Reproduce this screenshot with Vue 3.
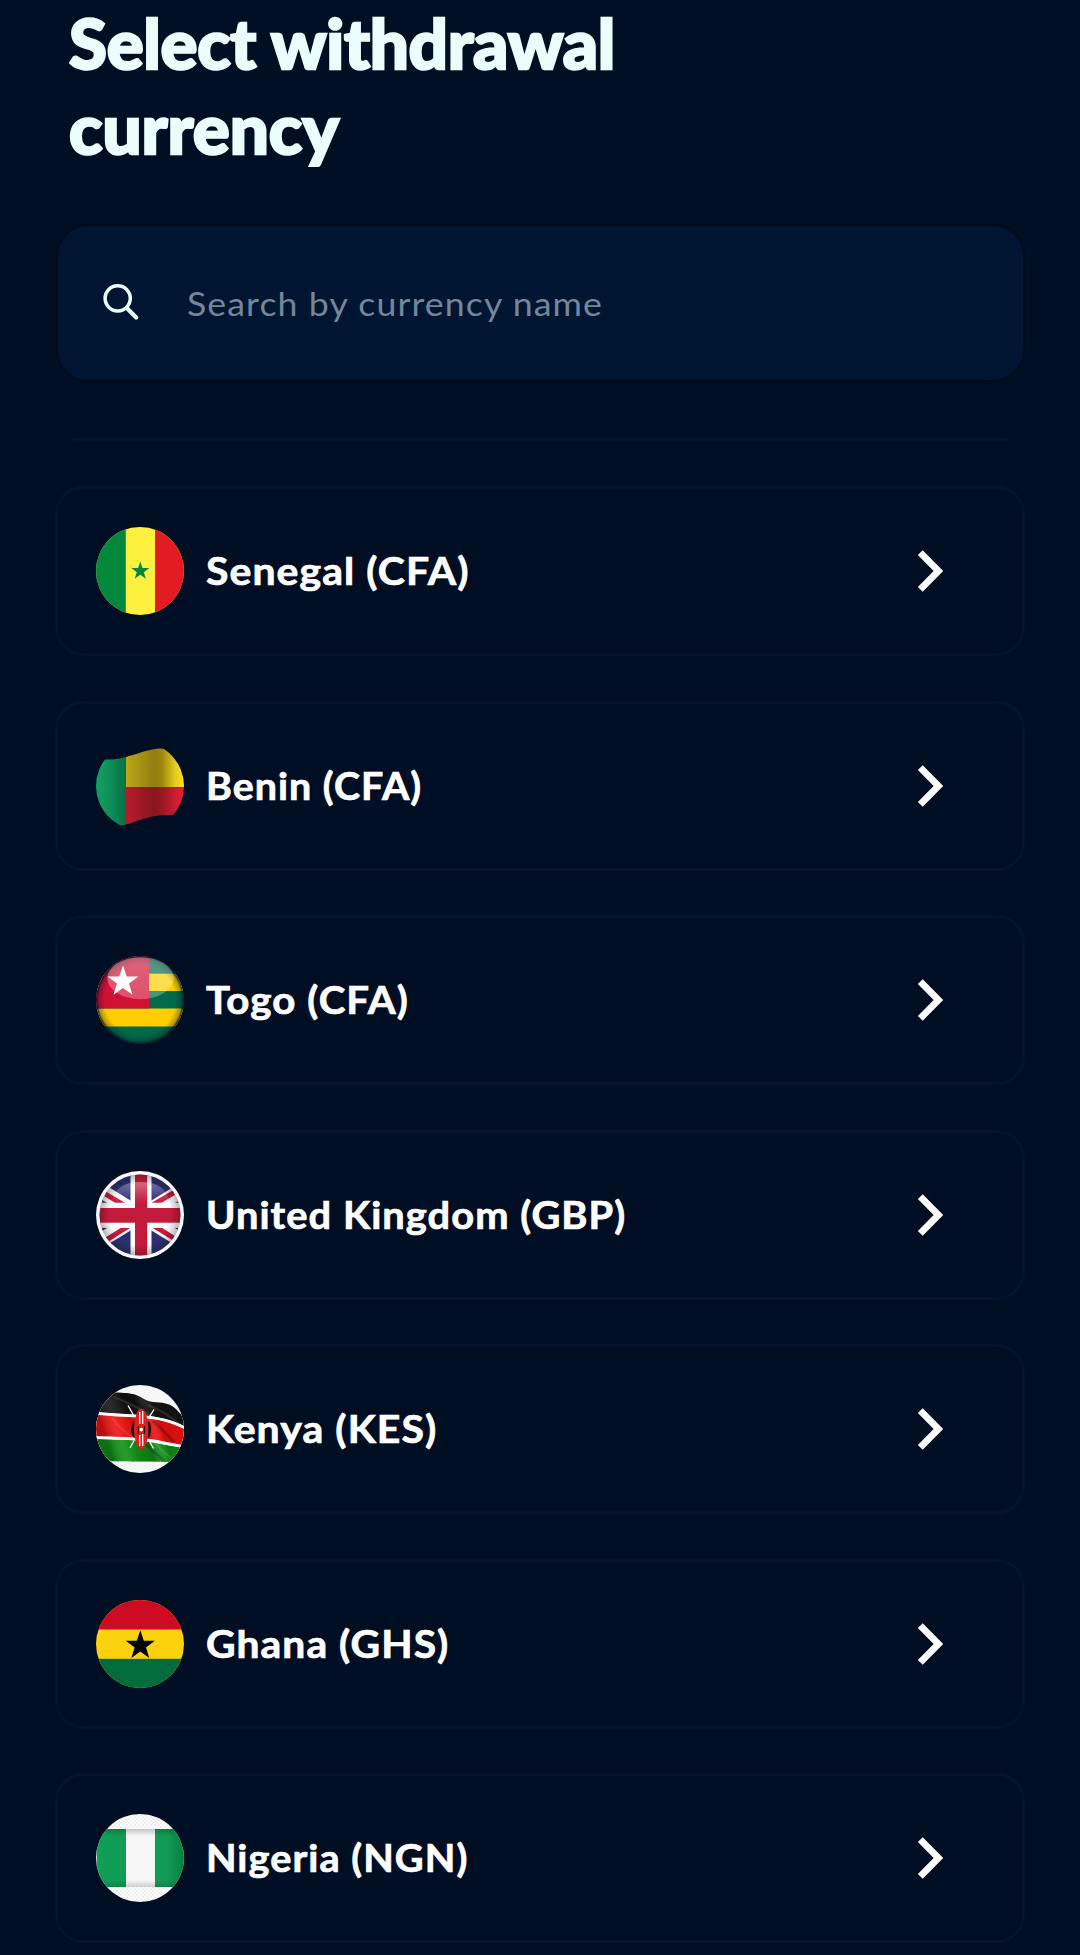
<script setup>
const countries = [
  { id: 'sn', name: 'Senegal (CFA)', stretch: 1.077 },
  { id: 'bj', name: 'Benin (CFA)', stretch: 1.036 },
  { id: 'tg', name: 'Togo (CFA)', stretch: 1.059 },
  { id: 'gb', name: 'United Kingdom (GBP)', stretch: 1.047 },
  { id: 'ke', name: 'Kenya (KES)', stretch: 1.078 },
  { id: 'gh', name: 'Ghana (GHS)', stretch: 1.072 },
  { id: 'ng', name: 'Nigeria (NGN)', stretch: 1.045 },
]

function star(cx, cy, r) {
  return Array.from({ length: 10 }, (_, i) => {
    const radius = i % 2 ? r * 0.39 : r
    const angle = (Math.PI / 5) * i - Math.PI / 2
    return `${(cx + radius * Math.cos(angle)).toFixed(2)},${(cy + radius * Math.sin(angle)).toFixed(2)}`
  }).join(' ')
}
</script>

<template>
  <main class="screen">
    <h1 class="title"><span class="first">Select withdrawal</span><br /><span class="second">currency</span></h1>

    <div class="search">
      <svg class="search-icon" viewBox="0 0 40 40" fill="none" stroke="#eafffb" stroke-linecap="round">
        <circle cx="15.7" cy="15.3" r="12.6" stroke-width="3.5" />
        <path d="M25 25.3 L34.2 34.5" stroke-width="4.2" />
      </svg>
      <span class="placeholder">Search by currency name</span>
    </div>

    <div class="divider"></div>

    <ul class="list">
      <li v-for="c in countries" :key="c.id" class="card">
        <svg class="flag" viewBox="0 0 88 88">
          <defs>
            <clipPath :id="`clip-${c.id}`"><circle cx="44" cy="44" r="44" /></clipPath>
          </defs>
          <g :clip-path="`url(#clip-${c.id})`">
            <template v-if="c.id === 'sn'">
              <rect width="88" height="88" fill="#fdf03f" />
              <rect width="29.8" height="88" fill="#04883c" />
              <rect x="59" width="29" height="88" fill="#e31b23" />
              <polygon :points="star(44.3, 44, 9.5)" fill="#04883c" />
            </template>

            <template v-else-if="c.id === 'bj'">
              <defs>
                <linearGradient id="bj-green"><stop offset="0" stop-color="#12a064" /><stop offset=".45" stop-color="#0e915a" /><stop offset="1" stop-color="#077046" /></linearGradient>
                <linearGradient id="bj-gold"><stop offset="0" stop-color="#bda71b" /><stop offset=".48" stop-color="#927e10" /><stop offset=".62" stop-color="#9d880f" /><stop offset=".85" stop-color="#e5cc1a" /><stop offset="1" stop-color="#ffe01c" /></linearGradient>
                <linearGradient id="bj-red"><stop offset="0" stop-color="#b81d2e" /><stop offset=".48" stop-color="#89161f" /><stop offset=".62" stop-color="#981824" /><stop offset="1" stop-color="#ea2139" /></linearGradient>
                <clipPath id="bj-wave"><path d="M0 17.5 H9 C21 18 28 15.5 35 13.5 C47 10 55 6.6 64 6.4 L88 8 V73 H77 C65 72.5 57 74 49 76.5 C41 79 34 81.5 26 83.5 L0 88 Z" /></clipPath>
              </defs>
              <g clip-path="url(#bj-wave)">
                <rect width="30" height="88" fill="url(#bj-green)" />
                <rect x="30" width="58" height="45.2" fill="url(#bj-gold)" />
                <rect x="30" y="45.2" width="58" height="43" fill="url(#bj-red)" />
              </g>
            </template>

            <template v-else-if="c.id === 'tg'">
              <defs>
                <radialGradient id="tg-edge"><stop offset=".8" stop-color="#000e22" stop-opacity="0" /><stop offset=".94" stop-color="#000e22" stop-opacity=".3" /><stop offset="1" stop-color="#000e22" stop-opacity=".95" /></radialGradient>
                <linearGradient id="tg-shine" x2="0" y2="1"><stop offset="0" stop-color="#fff" stop-opacity=".34" /><stop offset="1" stop-color="#fff" stop-opacity=".27" /></linearGradient>
              </defs>
              <rect width="88" height="88" fill="#006a4a" />
              <rect y="17.7" width="88" height="17.3" fill="#ffce00" />
              <rect y="52.5" width="88" height="18" fill="#ffce00" />
              <rect width="53" height="52.5" fill="#d21034" />
              <circle cx="44" cy="44" r="44" fill="url(#tg-edge)" />
              <ellipse cx="44.5" cy="22.2" rx="33.2" ry="21" fill="url(#tg-shine)" />
              <polygon :points="star(27, 25.6, 16.2)" fill="#fff" />
            </template>

            <template v-else-if="c.id === 'gb'">
              <defs>
                <clipPath id="gb-inner"><circle cx="44" cy="44" r="40.5" /></clipPath>
                <radialGradient id="gb-edge"><stop offset=".75" stop-color="#111" stop-opacity="0" /><stop offset="1" stop-color="#111" stop-opacity=".3" /></radialGradient>
                <linearGradient id="gb-shine" x2="0" y2="1"><stop offset="0" stop-color="#fff" stop-opacity=".35" /><stop offset="1" stop-color="#fff" stop-opacity="0" /></linearGradient>
              </defs>
              <rect width="88" height="88" fill="#fafaff" />
              <g clip-path="url(#gb-inner)">
                <rect width="88" height="88" fill="#2b2f72" />
                <path d="M-6 13 L96 76 M96 13 L-6 76" stroke="#fff" stroke-width="14.5" />
                <path d="M2 18.6 L30 35.5 M88 15.6 L56 34.5 M0 75.4 L34 54.2 M88 73.5 L56 53.6" stroke="#c41a3b" stroke-width="5" />
                <path d="M45 0 V88" stroke="#fff" stroke-width="21" />
                <rect y="31.7" width="88" height="25.2" fill="#fff" />
                <rect x="39" width="12.2" height="88" fill="#c41a3b" />
                <rect y="37" width="88" height="14.7" fill="#c41a3b" />
                <path d="M16 32 Q18 11 44.5 11 Q71 11 73 32 Z" fill="url(#gb-shine)" />
                <circle cx="44" cy="44" r="40.5" fill="url(#gb-edge)" />
              </g>
            </template>

            <template v-else-if="c.id === 'ke'">
              <defs>
                <linearGradient id="ke-folds" x1="0" y1=".2" x2=".8" y2="0"><stop offset="0" stop-color="#000" stop-opacity=".22" /><stop offset=".2" stop-color="#fff" stop-opacity=".1" /><stop offset=".38" stop-color="#000" stop-opacity=".1" /><stop offset=".55" stop-color="#000" stop-opacity=".2" /><stop offset=".68" stop-color="#fff" stop-opacity=".08" /><stop offset=".78" stop-color="#000" stop-opacity=".15" /><stop offset="1" stop-color="#000" stop-opacity=".08" /></linearGradient>
              </defs>
              <rect width="88" height="88" fill="#f7f7f7" />
              <path d="M0 7 L19 7.6 C38 8 41 10 48 14 C56 19 64 16 73 19.5 C79 22 83 27 88 33 V77 H16 L0 74 Z" fill="#fff" />
              <path d="M0 7 L19 7.6 C38 8 41 10 48 14 C56 19 64 16 73 19.5 C79 22 83 27 88 33 V41 C80 37 74 34.5 62 32.5 C45 29 25 29.5 0 26.8 Z" fill="#141414" />
              <path d="M0 29.8 C25 32.5 42 31.5 58 34 C70 36 80 40 88 44 V60.2 C73 57.5 60 54.5 49 53.5 C33 52 20 52 0 51 Z" fill="#ee1211" />
              <path d="M0 54 C20 55 35 54.5 49 56.3 C65 58.7 76 61.5 88 62.7 V74 L72 77 C48 76.5 35 77 16 76 L0 74 Z" fill="#109016" />
              <path d="M0 7 L19 7.6 C38 8 41 10 48 14 C56 19 64 16 73 19.5 C79 22 83 27 88 33 V77 H16 L0 74 Z" fill="url(#ke-folds)" />
              <path d="M18 12 Q44 22 58 34 M52 20 Q70 27 86 41 M16 33 Q28 48 37 52 M58 57 Q67 68 76 73" fill="none" stroke="#fff" stroke-opacity=".1" stroke-width="2" />
              <path d="M57 36 Q68 46 78 57 M48 57 Q60 70 69 76 M24 11 Q54 24 63 32" fill="none" stroke="#000" stroke-opacity=".2" stroke-width="3" />
              <path d="M0 28.3 C25 30.9 43 30.3 60 33.2 C71 35.2 80 38.6 88 42.4 M0 52.5 C20 53.5 33 53.2 49 54.9 C63 56.6 75 60 88 61.5" fill="none" stroke="#fff" stroke-width="2.6" />
              <path d="M32 20.5 L38 31 M58 24.5 L52.5 33 M34 63 L38 55.5 M57.5 63.5 L53 55.5" stroke="#fff" stroke-width="1.3" />
              <ellipse cx="38.2" cy="44.5" rx="2.8" ry="8" fill="#210b0b" />
              <ellipse cx="52.3" cy="44.5" rx="2.8" ry="8" fill="#210b0b" />
              <ellipse cx="45.2" cy="44" rx="7.2" ry="20.3" fill="#dc201c" />
              <path d="M43.7 27 V39 M46.7 26 V39 M43.7 50 V61 M46.7 49 V61" stroke="#fff" stroke-width="1.3" />
              <circle cx="45.2" cy="44.6" r="1.8" fill="#fff" />
              <path d="M42.2 41 V49 M48.5 41 V49" stroke="#38100f" stroke-width="1.2" />
            </template>

            <template v-else-if="c.id === 'gh'">
              <rect width="88" height="88" fill="#fcd20f" />
              <rect width="88" height="29.5" fill="#cf0a23" />
              <rect y="58.8" width="88" height="30" fill="#026c3d" />
              <polygon :points="star(44.3, 45.6, 15.3)" fill="#000" />
            </template>

            <template v-else>
              <defs>
                <pattern id="ng-check" width="4" height="4" patternUnits="userSpaceOnUse"><rect width="4" height="4" fill="#fff" /><path d="M0 0h2v2H0z M2 2h2v2H2z" fill="#efefef" /></pattern>
                <linearGradient id="ng-green"><stop offset="0" stop-color="#0fa056" /><stop offset=".2" stop-color="#129b54" /><stop offset=".8" stop-color="#129b54" /><stop offset="1" stop-color="#078040" /></linearGradient>
                <linearGradient id="ng-shade" x2="0" y2="1"><stop offset="0" stop-color="#000" stop-opacity=".2" /><stop offset=".12" stop-color="#000" stop-opacity="0" /><stop offset=".88" stop-color="#000" stop-opacity="0" /><stop offset="1" stop-color="#000" stop-opacity=".16" /></linearGradient>
              </defs>
              <rect width="88" height="88" fill="url(#ng-check)" />
              <rect x=".8" y="15" width="87.2" height="58" fill="url(#ng-green)" />
              <rect x="30" y="15" width="29" height="58" fill="#f6f6f6" />
              <rect y="15" width="88" height="58" fill="url(#ng-shade)" />
            </template>
          </g>
        </svg>
        <span class="name" :style="{ transform: `scaleX(${c.stretch})` }">{{ c.name }}</span>
        <svg class="chevron" viewBox="0 0 26 44" fill="none" stroke="#fff" stroke-width="6.8">
          <path d="M3.3 3.7 L21.5 22 L3.3 40.3" />
        </svg>
      </li>
    </ul>
  </main>
</template>

<style>
body {
  background: #000e23;
}
</style>

<style scoped>
.screen {
  box-sizing: border-box;
  height: 1955px;
  overflow: hidden;
  padding: 0 55px;
  background: #000e23;
  font-family: Lato, "Open Sans", sans-serif;
}
.title {
  box-sizing: border-box;
  margin: 0 0 0 14px;
  height: 224px;
  color: #eafffb;
  font-size: 69px;
  font-weight: 900;
  line-height: 85px;
  white-space: nowrap;
  -webkit-text-stroke: 2.4px #eafffb;
}
.first {
  letter-spacing: -0.3px;
}
.second {
  letter-spacing: 0;
}
.search {
  box-sizing: border-box;
  display: flex;
  align-items: center;
  width: 969px;
  height: 158px;
  margin-left: 1px;
  border: 2px solid #000a19;
  border-radius: 32px;
  background: #001532;
  padding-left: 44px;
}
.search-icon {
  width: 40px;
  height: 40px;
}
.placeholder {
  margin-left: 45px;
  padding-bottom: 1px;
  color: #74879a;
  font-size: 33px;
  letter-spacing: 1px;
  white-space: nowrap;
  transform: scaleX(1.082);
  transform-origin: 0 50%;
}
.divider {
  height: 3px;
  margin: 56px 16px 0 17px;
  border-radius: 3px;
  background: #03142f;
}
.list {
  display: flex;
  flex-direction: column;
  gap: 44.5px;
  margin: 45px 0 0;
  padding: 0;
  list-style: none;
}
.card {
  box-sizing: border-box;
  display: flex;
  flex: none;
  align-items: center;
  height: 170px;
  border: 3px solid #03142f;
  border-radius: 28px;
  padding: 0 79.5px 0 38px;
}
.flag {
  flex: none;
  width: 88px;
  height: 88px;
}
.name {
  margin-left: 22px;
  padding-bottom: 2px;
  color: #fff;
  font-size: 38px;
  font-weight: 700;
  line-height: 48px;
  letter-spacing: 1px;
  white-space: nowrap;
  transform-origin: 0 50%;
  -webkit-text-stroke: 0.7px #fff;
}
.chevron {
  width: 26px;
  height: 44px;
  margin-left: auto;
}
</style>
